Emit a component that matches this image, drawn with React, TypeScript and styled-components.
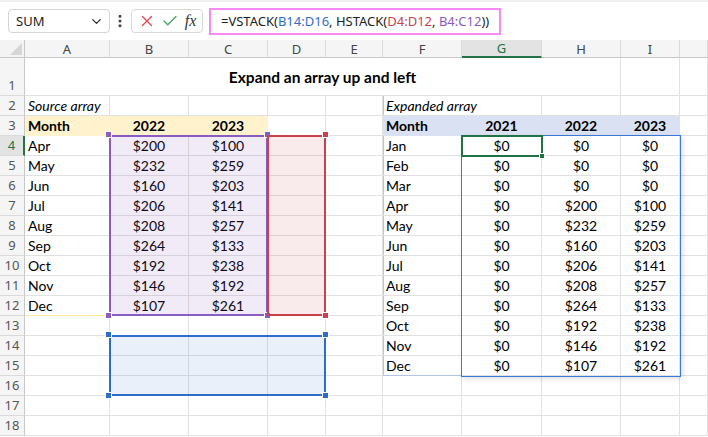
import React from "react";
import styled, { createGlobalStyle, css } from "styled-components";
import { ChevronDown, EllipsisVertical, X, Check } from "lucide-react";

const GlobalStyle = createGlobalStyle`
  html, body {
    margin: 0;
    padding: 0;
    background: #ffffff;
    overflow: hidden;
  }
  * { box-sizing: border-box; }
`;

// column widths: row header, A..I, rest
const COLS = [25, 85, 79, 79, 58, 57, 79, 80, 79, 59, 28];
const HEADER_H = 18;
const ROW_H = (r: number) => (r === 1 ? 38 : 20);
const LETTERS = ["A", "B", "C", "D", "E", "F", "G", "H", "I", ""];

const colLeft = (i: number) => COLS.slice(0, i).reduce((a, b) => a + b, 0);
const rowTop = (r: number) => {
  let y = HEADER_H;
  for (let k = 1; k < r; k++) y += ROW_H(k);
  return y;
};

const YELLOW = "#FFF2CC";
const BLUE_FILL = "#D9E1F2";
const GRID = "#E1E1E1";

const Frame = styled.div`
  width: 708px;
  height: 437px;
  display: flex;
  flex-direction: column;
  background: #fff;
  font-family: "Noto Sans", "Open Sans", sans-serif;
`;

const FormulaBar = styled.div`
  height: 40px;
  display: flex;
  align-items: center;
  padding: 0 8px;
  border-top: 2px solid #f0f0f0;
`;

const NameBox = styled.div`
  width: 102px;
  height: 24px;
  border: 1px solid #d4d4d4;
  border-radius: 4px;
  display: flex;
  align-items: center;
  justify-content: space-between;
  padding: 0 5px 0 7px;
  font-size: 13px;
  color: #222;
`;

const Dots = styled.div`
  width: 20px;
  display: flex;
  justify-content: center;
  color: #444;
`;

const IconBox = styled.div`
  width: 72px;
  height: 24px;
  border: 1px solid #d9d9d9;
  border-radius: 4px;
  display: flex;
  align-items: center;
  justify-content: space-around;
  padding: 0 3px;
  margin-left: 1px;
`;

const Fx = styled.span`
  font-family: "Liberation Serif", "DejaVu Serif", serif;
  font-style: italic;
  font-size: 16px;
  color: #333;
`;

const FormulaInput = styled.div`
  width: 292px;
  height: 27px;
  margin-left: 6px;
  border: 2px solid #f78af2;
  display: flex;
  align-items: center;
  padding-left: 10px;
  font-size: 13px;
  color: #222;
  white-space: pre;
`;

const Ref = styled.span<{ $c: string }>`
  color: ${(p) => p.$c};
`;

const Sheet = styled.div`
  position: relative;
  display: grid;
  grid-template-columns: ${COLS.map((c) => `${c}px`).join(" ")};
  grid-template-rows: ${HEADER_H}px 38px repeat(17, 20px);
  font-family: "Lato", "Liberation Sans", sans-serif;
  font-size: 14px;
  color: #000;
`;

const Corner = styled.div`
  background: #f3f3f3;
  border-right: 1px solid #c8c8c8;
  border-bottom: 1px solid #c8c8c8;
  position: relative;
  &::after {
    content: "";
    position: absolute;
    right: 2px;
    bottom: 2px;
    border-left: 12px solid transparent;
    border-bottom: 12px solid #d6d6d6;
  }
`;

const ColHead = styled.div<{ $active?: boolean }>`
  background: ${(p) => (p.$active ? "#e3e3e3" : "#f5f5f5")};
  border-right: 1px solid #dadada;
  border-bottom: ${(p) => (p.$active ? "2px solid #217346" : "1px solid #c8c8c8")};
  display: flex;
  align-items: center;
  justify-content: center;
  font-family: "Noto Sans", "Open Sans", sans-serif;
  font-size: 13px;
  color: ${(p) => (p.$active ? "#217346" : "#444")};
`;

const RowHead = styled.div<{ $active?: boolean }>`
  background: ${(p) => (p.$active ? "#e3e3e3" : "#f5f5f5")};
  border-right: ${(p) => (p.$active ? "2px solid #217346" : "1px solid #c8c8c8")};
  border-bottom: 1px solid #dadada;
  display: flex;
  align-items: flex-end;
  justify-content: center;
  padding-bottom: 1px;
  font-family: "Noto Sans", "Open Sans", sans-serif;
  font-size: 13px;
  color: ${(p) => (p.$active ? "#217346" : "#555")};
`;

type CellSpec = {
  text?: string;
  align?: "left" | "center";
  bold?: boolean;
  italic?: boolean;
  fill?: string;
  span?: number;
  edgeLeft?: string;
  edgeBottom?: string;
  pad?: number;
  size?: number;
};

const Cell = styled.div<{
  $align: string;
  $bold?: boolean;
  $italic?: boolean;
  $fill?: string;
  $span: number;
  $edgeLeft?: string;
  $edgeBottom?: string;
  $pad: number;
  $size?: number;
}>`
  grid-column: span ${(p) => p.$span};
  display: flex;
  align-items: flex-end;
  justify-content: ${(p) => (p.$align === "center" ? "center" : "flex-start")};
  padding: 0 3px ${(p) => p.$pad}px 3px;
  white-space: nowrap;
  overflow: visible;
  font-size: ${(p) => p.$size || 14}px;
  font-weight: ${(p) => (p.$bold ? 700 : 400)};
  font-style: ${(p) => (p.$italic ? "italic" : "normal")};
  background: ${(p) => p.$fill || "transparent"};
  border-right: 1px solid ${(p) => p.$fill || GRID};
  border-bottom: 1px solid ${(p) => p.$edgeBottom || p.$fill || GRID};
  ${(p) =>
    p.$edgeLeft &&
    css`
      box-shadow: inset 1px 0 0 ${p.$edgeLeft};
    `}
`;

const Range = styled.div<{ $c: string; $bg?: string; $w: number }>`
  position: absolute;
  border: ${(p) => p.$w}px solid ${(p) => p.$c};
  background: ${(p) => p.$bg || "transparent"};
  pointer-events: none;
`;

const Spill = styled(Range)`
  box-shadow: 2px 2px 5px rgba(0, 0, 0, 0.12);
`;

const Handle = styled.div<{ $c: string }>`
  position: absolute;
  width: 7px;
  height: 7px;
  background: ${(p) => p.$c};
  border: 1px solid #fff;
  pointer-events: none;
`;

const left = [
  ["Apr", "$200", "$100"],
  ["May", "$232", "$259"],
  ["Jun", "$160", "$203"],
  ["Jul", "$206", "$141"],
  ["Aug", "$208", "$257"],
  ["Sep", "$264", "$133"],
  ["Oct", "$192", "$238"],
  ["Nov", "$146", "$192"],
  ["Dec", "$107", "$261"],
];

const right = [
  ["Jan", "$0", "$0", "$0"],
  ["Feb", "$0", "$0", "$0"],
  ["Mar", "$0", "$0", "$0"],
  ...left.map((r) => [r[0], "$0", r[1], r[2]]),
];

const LEFT_EDGE = "#B4C6E7";
const YELLOW_EDGE = "#FFE699";

function buildRows(): CellSpec[][] {
  const rows: CellSpec[][] = [];
  for (let r = 1; r <= 18; r++) {
    const row: CellSpec[] = [];
    if (r === 1) {
      row.push({ text: "Expand an array up and left", bold: true, align: "center", span: 8, pad: 9, size: 15.5 });
      row.push({}, {});
    } else if (r === 2) {
      row.push({ text: "Source array", italic: true }, {}, {}, {}, {});
      row.push({ text: "Expanded array", italic: true, span: 2, edgeLeft: LEFT_EDGE }, {}, {}, {});
    } else if (r === 3) {
      row.push(
        { text: "Month", bold: true, fill: YELLOW },
        { text: "2022", bold: true, align: "center", fill: YELLOW },
        { text: "2023", bold: true, align: "center", fill: YELLOW },
        {},
        {},
        { text: "Month", bold: true, fill: BLUE_FILL },
        { text: "2021", bold: true, align: "center", fill: BLUE_FILL },
        { text: "2022", bold: true, align: "center", fill: BLUE_FILL },
        { text: "2023", bold: true, align: "center", fill: BLUE_FILL },
        {}
      );
    } else {
      const l = left[r - 4];
      if (l) {
        row.push(
          { text: l[0], edgeBottom: r === 12 ? YELLOW_EDGE : undefined },
          { text: l[1], align: "center" },
          { text: l[2], align: "center" }
        );
      } else {
        row.push({}, {}, {});
      }
      row.push({}, {});
      const rr = right[r - 4];
      if (rr) {
        row.push(
          { text: rr[0], edgeLeft: LEFT_EDGE, edgeBottom: r === 15 ? LEFT_EDGE : undefined },
          { text: rr[1], align: "center" },
          { text: rr[2], align: "center" },
          { text: rr[3], align: "center" }
        );
      } else {
        row.push({}, {}, {}, {});
      }
      row.push({});
    }
    rows.push(row);
  }
  return rows;
}

type Box = { x: number; y: number; w: number; h: number };
// columns given as 1=A..9=I, rows as sheet rows
const boxOf = (c1: number, c2: number, r1: number, r2: number): Box => {
  const x = colLeft(c1) - 1;
  const y = rowTop(r1) - 1;
  return { x, y, w: colLeft(c2 + 1) - x, h: rowTop(r2 + 1) - y };
};

function HighlightRange({
  box,
  color,
  fill,
  corners,
}: {
  box: Box;
  color: string;
  fill: string;
  corners: ("tl" | "tr" | "bl" | "br")[];
}) {
  return (
    <>
      <Range
        $c={color}
        $bg={fill}
        $w={2}
        style={{ left: box.x, top: box.y, width: box.w, height: box.h }}
      />
      {corners.map((k) => (
        <Handle
          key={k}
          $c={color}
          style={{
            left: (k[1] === "l" ? box.x : box.x + box.w) - 4,
            top: (k[0] === "t" ? box.y : box.y + box.h) - 4,
          }}
        />
      ))}
    </>
  );
}

export default function App() {
  const rows = buildRows();
  const purple = boxOf(2, 3, 4, 12);
  const red = boxOf(4, 4, 4, 12);
  const blue = boxOf(2, 4, 14, 16);
  const spill = boxOf(7, 9, 4, 15);
  const active = boxOf(7, 7, 4, 4);

  return (
    <Frame>
      <GlobalStyle />
      <FormulaBar>
        <NameBox>
          <span>SUM</span>
          <ChevronDown size={15} strokeWidth={2.2} color="#333" />
        </NameBox>
        <Dots>
          <EllipsisVertical size={16} strokeWidth={2.6} />
        </Dots>
        <IconBox>
          <X size={18} strokeWidth={1.6} color="#e2444e" />
          <Check size={18} strokeWidth={1.6} color="#3ba55c" />
          <Fx>fx</Fx>
        </IconBox>
        <FormulaInput>
          {"=VSTACK("}
          <Ref $c="#2f6fcb">B14:D16</Ref>
          {", HSTACK("}
          <Ref $c="#c8414b">D4:D12</Ref>
          {", "}
          <Ref $c="#8a5cc2">B4:C12</Ref>
          {"))"}
        </FormulaInput>
      </FormulaBar>

      <Sheet>
        <Corner />
        {LETTERS.map((l, i) => (
          <ColHead key={i} $active={l === "G"}>
            {l}
          </ColHead>
        ))}
        {rows.map((row, ri) => (
          <React.Fragment key={ri}>
            <RowHead $active={ri + 1 === 4}>{ri + 1}</RowHead>
            {row.map((c, ci) => (
              <Cell
                key={ci}
                $align={c.align || "left"}
                $bold={c.bold}
                $italic={c.italic}
                $fill={c.fill}
                $span={c.span || 1}
                $edgeLeft={c.edgeLeft}
                $edgeBottom={c.edgeBottom}
                $pad={c.pad ?? 1}
                $size={c.size}
              >
                {c.text}
              </Cell>
            ))}
          </React.Fragment>
        ))}

        <HighlightRange box={purple} color="#8a5cc2" fill="rgba(138, 92, 194, 0.12)" corners={["tl", "tr", "bl", "br"]} />
        <HighlightRange box={red} color="#c8414b" fill="rgba(200, 65, 75, 0.11)" corners={["tr", "br"]} />
        <HighlightRange box={blue} color="#2f6bc8" fill="rgba(47, 107, 200, 0.1)" corners={["tl", "tr", "bl", "br"]} />

        <Spill
          $c="#3b78d4"
          $w={1}
          style={{ left: spill.x, top: spill.y, width: spill.w + 1, height: spill.h + 1 }}
        />
        <Range
          $c="#217346"
          $w={2}
          style={{ left: active.x, top: active.y, width: active.w + 1, height: active.h + 1 }}
        />
        <Handle
          $c="#217346"
          style={{ left: active.x + active.w - 3, top: active.y + active.h - 3, width: 6, height: 6 }}
        />
      </Sheet>
    </Frame>
  );
}
